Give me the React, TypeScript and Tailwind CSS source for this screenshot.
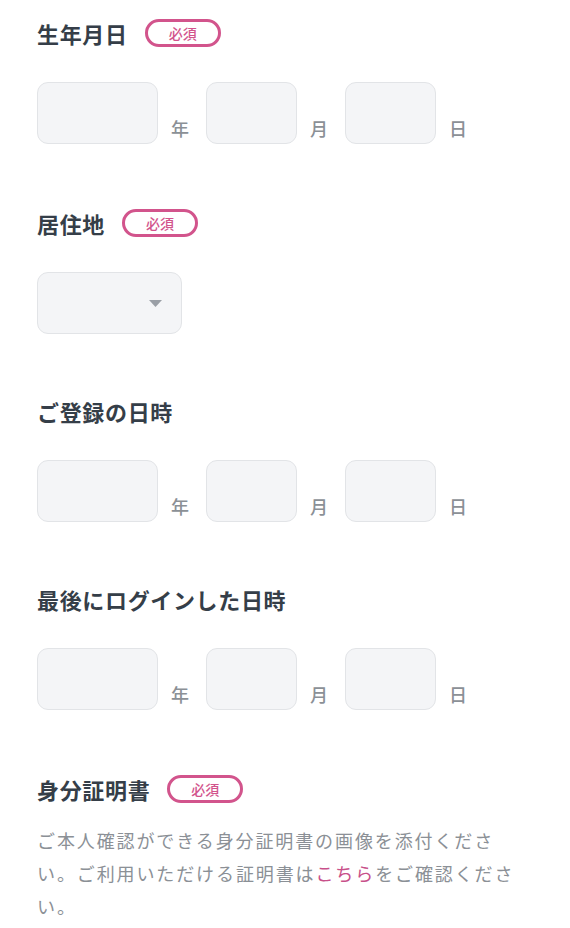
import React from "react";

const font = { fontFamily: '"Noto Sans CJK JP", "Noto Sans", sans-serif' };

function Badge() {
  return (
    <span className="ml-[17px] inline-flex h-[28px] w-[76px] items-center justify-center rounded-full border-[3px] border-[#d2548c] text-[14px] font-medium leading-none text-[#d2548c]">
      必須
    </span>
  );
}

function Title({ text, required }: { text: string; required?: boolean }) {
  return (
    <div className="flex h-[30px] items-center">
      <h2 className="text-[22px] font-bold leading-none tracking-[0.03em] text-[#353e48]">{text}</h2>
      {required && <Badge />}
    </div>
  );
}

function Box({ w }: { w: string }) {
  return <div className={`${w} h-[62px] rounded-[11px] border border-[#e2e4e7] bg-[#f4f5f7]`} />;
}

function Unit({ t }: { t: string }) {
  return <span className="ml-[13px] mr-[17px] pb-[7px] text-[18px] font-medium leading-none text-[#8b9096]">{t}</span>;
}

function DateRow() {
  return (
    <div className="mt-[34px] flex items-end">
      <Box w="w-[121px]" />
      <Unit t="年" />
      <Box w="w-[91px]" />
      <Unit t="月" />
      <Box w="w-[91px]" />
      <Unit t="日" />
    </div>
  );
}

export default function App() {
  return (
    <div className="min-h-[928px] w-[570px] bg-white px-[37px] pt-[18px]" style={font}>
      <section>
        <Title text="生年月日" required />
        <DateRow />
      </section>
      <section className="mt-[64px]">
        <Title text="居住地" required />
        <div className="mt-[34px] flex h-[62px] w-[145px] items-center justify-end rounded-[11px] border border-[#e2e4e7] bg-[#f4f5f7] pr-[19px]">
          <svg width="13" height="7" viewBox="0 0 13 7">
            <path d="M0 0 H13 L6.5 7 Z" fill="#9a9fa6" />
          </svg>
        </div>
      </section>
      <section className="mt-[62px]">
        <Title text="ご登録の日時" />
        <DateRow />
      </section>
      <section className="mt-[62px]">
        <Title text="最後にログインした日時" />
        <DateRow />
      </section>
      <section className="mt-[64px]">
        <Title text="身分証明書" required />
        <p className="mt-[20px] text-[18px] leading-[33px] tracking-[0.105em] text-[#8b9096]">
          ご本人確認ができる身分証明書の画像を添付ください。ご利用いただける証明書は
          <span className="text-[#c8508a]">こちら</span>をご確認ください。
        </p>
      </section>
    </div>
  );
}
